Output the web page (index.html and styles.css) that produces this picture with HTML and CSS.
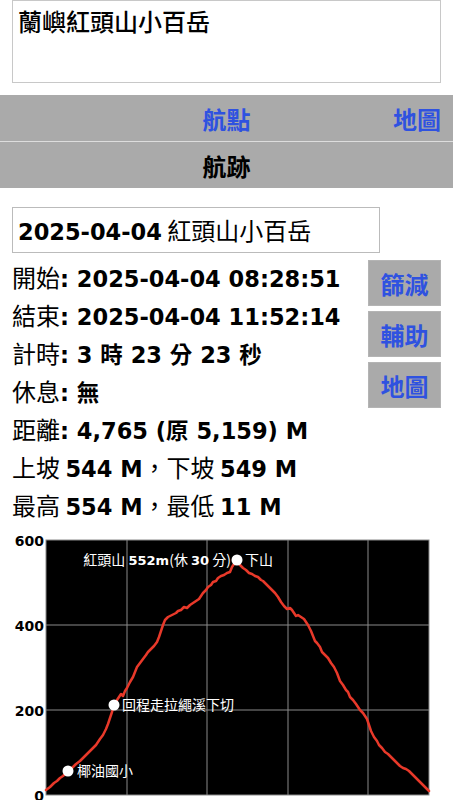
FILE: index.html
```html
<!DOCTYPE html>
<html lang="zh-Hant">
<head>
    <meta charset="UTF-8">
    <meta name="viewport" content="width=device-width, initial-scale=1.0">
    <title>航跡 - 蘭嶼紅頭山小百岳</title>
    <link rel="stylesheet" href="styles.css">
</head>
<body>
    <div class="title-box">蘭嶼紅頭山小百岳</div>

    <div class="tabs">
        <div class="tab-row">
            <span></span>
            <a class="link">航點</a>
            <a class="link right">地圖</a>
        </div>
        <div class="tab-row current">
            <span></span>
            <span class="tab-label">航跡</span>
            <span></span>
        </div>
    </div>

    <div class="name-box"><b class="num">2025-04-04</b> 紅頭山小百岳</div>

    <div class="info">
        <div class="stats">
            <div class="line">開始<b class="num">: 2025-04-04 08:28:51</b></div>
            <div class="line">結束<b class="num">: 2025-04-04 11:52:14</b></div>
            <div class="line">計時<b class="num">: 3 時 23 分 23 秒</b></div>
            <div class="line">休息<b class="num">: 無</b></div>
            <div class="line">距離<b class="num">: 4,765 (原 5,159) M</b></div>
            <div class="line">上坡 <b class="num">544 M</b>，下坡 <b class="num">549 M</b></div>
            <div class="line">最高 <b class="num">554 M</b>，最低 <b class="num">11 M</b></div>
        </div>
        <div class="actions">
            <button class="btn">篩減</button>
            <button class="btn">輔助</button>
            <button class="btn">地圖</button>
        </div>
    </div>

    <!-- elevation chart, drawn in page coordinates -->
    <svg class="chart" width="453" height="285" viewBox="0 530 453 285">
        <rect class="plot" x="46" y="540" width="383" height="255"/>
        <line class="grid" x1="46" y1="625" x2="429" y2="625"/>
        <line class="grid" x1="46" y1="710" x2="429" y2="710"/>
        <line class="grid" x1="127" y1="540" x2="127" y2="795"/>
        <line class="grid" x1="207" y1="540" x2="207" y2="795"/>
        <line class="grid" x1="288" y1="540" x2="288" y2="795"/>
        <line class="grid" x1="368" y1="540" x2="368" y2="795"/>
        <rect class="frame" x="46" y="540" width="383" height="255"/>

        <text class="axis" x="44" y="546">600</text>
        <text class="axis" x="44" y="631">400</text>
        <text class="axis" x="44" y="716">200</text>
        <text class="axis" x="44" y="801">0</text>
        <text class="axis mid" x="127" y="812">1H</text>
        <text class="axis mid" x="207" y="812">2H</text>
        <text class="axis mid" x="288" y="812">3H</text>
        <text class="axis mid" x="368" y="812">4H</text>

        <polyline class="track" points="46,790 50,787 54,783 57,781 60,778 63,776 66,773 68,771 72,768 76,764 80,761 84,757 88,753 92,749 96,745 100,739 103,735 106,729 108,724 110,718 112,712 114,705 117,700 119,697 121,694 123,696 125,691 127,688 130,682 133,677 135,672 137,667 140,663 143,659 146,655 148,652 151,649 154,646 157,642 159,637 161,631 163,625 165,620 168,617 172,615 176,613 178,611 181,610 184,607 187,608 190,605 193,603 196,601 199,599 201,596 203,593 206,590 208,587 211,585 213,582 216,581 218,578 221,576 224,575 227,573 230,572 232,567 234,564 237,560 240,565 243,568 246,570 249,573 252,574 255,576 258,577 261,580 263,581 266,584 269,587 272,590 275,593 278,597 281,602 284,606 287,609 290,608 292,610 294,613 296,616 298,615 301,617 304,619 306,622 308,625 311,631 313,636 315,641 317,643 320,647 322,652 325,655 328,658 331,663 334,667 337,673 340,681 343,685 346,690 348,692 350,697 353,700 356,704 358,707 360,710 363,713 365,716 367,719 369,725 371,731 374,737 377,741 379,745 382,748 385,752 388,754 391,757 394,760 397,763 400,766 403,768 406,769 409,771 412,774 415,777 418,780 421,783 424,786 427,789 429,791"/>

        <circle class="mark" cx="68" cy="771" r="5.5"/>
        <circle class="mark" cx="114" cy="705" r="5.5"/>
        <circle class="mark" cx="237" cy="560" r="5.5"/>

        <text class="note end" x="231" y="565">紅頭山 <tspan class="bold">552m</tspan>(休 <tspan class="bold">30</tspan> 分)</text>
        <text class="note" x="245" y="565">下山</text>
        <text class="note" x="122" y="710">回程走拉繩溪下切</text>
        <text class="note" x="77" y="776">椰油國小</text>
    </svg>
</body>
</html>
```

FILE: styles.css
```css
/* track detail page */
body {
    margin: 0;
    font-family: "Noto Sans CJK TC", sans-serif;
    font-size: 24px;
    color: #000;
    background: #fff;
}

.num {
    font-family: "DejaVu Sans", "Noto Sans CJK TC", sans-serif;
    font-size: 22.5px;
    font-weight: bold;
    line-height: 1;
}

.title-box {
    margin: 0 12px;
    height: 83px;
    box-sizing: border-box;
    border: 1px solid #c8c8c8;
    padding: 5px 5px;
    line-height: 30px;
    font-weight: 500;
}

.tabs {
    margin-top: 12px;
}

.tab-row {
    display: grid;
    grid-template-columns: 1fr auto 1fr;
    align-items: center;
    height: 46px;
    padding: 0 12px;
    background-color: #aaa;
    font-weight: bold;
}

.tab-row.current {
    border-top: 1px solid #ddd;
}

.link {
    color: #2f52e0;
    cursor: pointer;
}

.link.right {
    justify-self: end;
}

.name-box {
    margin: 19px 0 0 12px;
    width: 368px;
    height: 46px;
    box-sizing: border-box;
    border: 1px solid #bbb;
    padding: 0 5px;
    line-height: 44px;
}

.info {
    display: flex;
    padding: 0 12px;
    margin-top: 5px;
}

.stats {
    flex: 1;
}

.line {
    height: 38px;
    line-height: 38px;
    white-space: nowrap;
}

.actions {
    display: flex;
    flex-direction: column;
    gap: 5px;
    margin-top: 2px;
}

.btn {
    width: 73px;
    height: 46px;
    padding: 0;
    border: 1px solid #b4b4b4;
    background-color: #aaa;
    color: #2f52e0;
    font-family: "Noto Sans CJK TC", sans-serif;
    font-size: 24px;
    font-weight: bold;
    cursor: pointer;
}

.chart {
    display: block;
    margin-top: 6px;
}

.plot {
    fill: #000;
}

.grid {
    stroke: #8a8a8a;
    stroke-width: 1;
}

.frame {
    fill: none;
    stroke: #8a8a8a;
    stroke-width: 1;
}

.axis {
    font-family: "DejaVu Sans", sans-serif;
    font-size: 14px;
    font-weight: bold;
    text-anchor: end;
    fill: #000;
}

.axis.mid {
    text-anchor: middle;
}

.track {
    fill: none;
    stroke: #e8392a;
    stroke-width: 2.5;
    stroke-linejoin: round;
    stroke-linecap: round;
}

.mark {
    fill: #fff;
}

.note {
    font-family: "Noto Sans CJK TC", sans-serif;
    font-size: 14px;
    fill: #fff;
}

.note.end {
    text-anchor: end;
}

.note .bold {
    font-family: "DejaVu Sans", sans-serif;
    font-size: 13px;
    font-weight: bold;
}
```
